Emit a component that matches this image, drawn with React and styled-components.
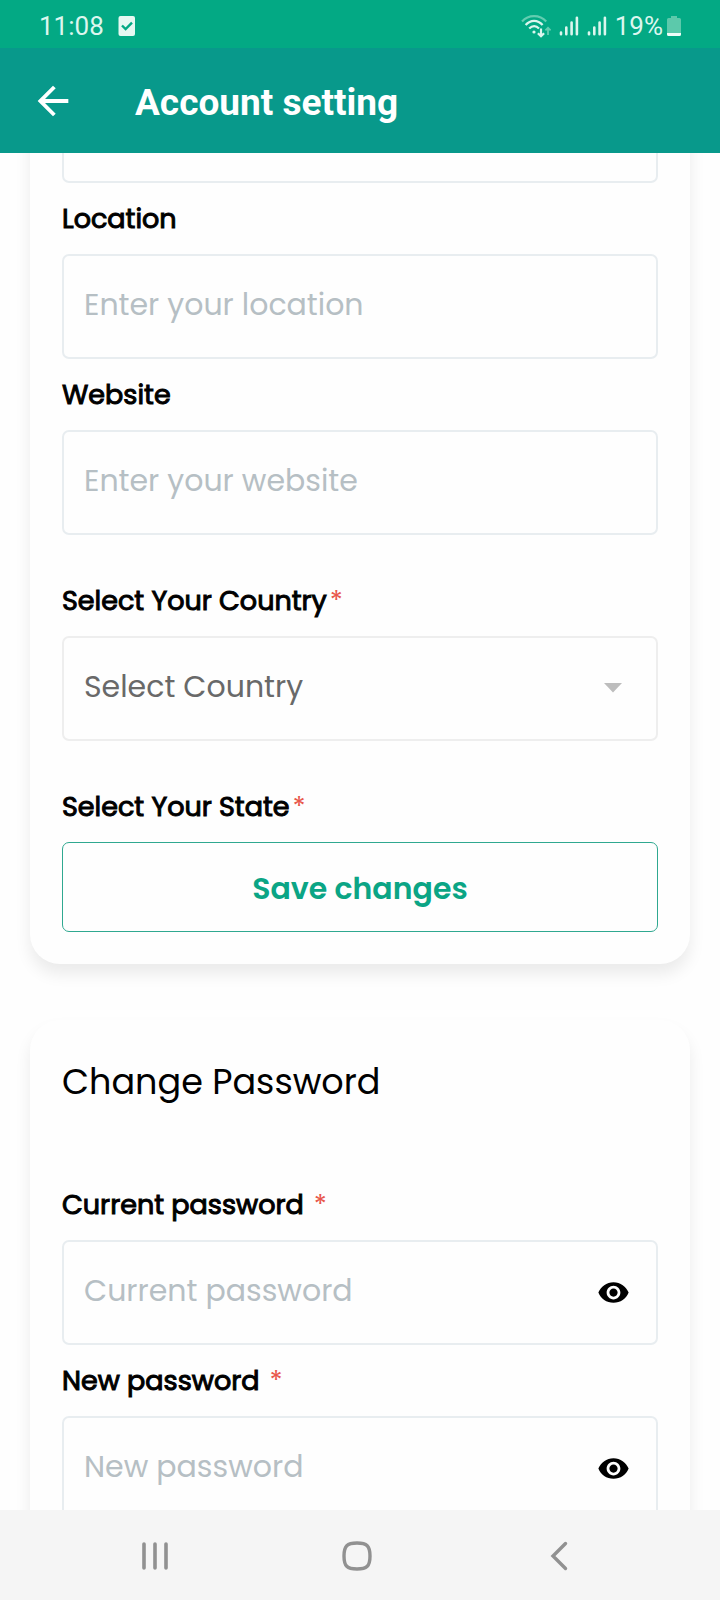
import React from "react";
import styled, { createGlobalStyle } from "styled-components";

const GlobalStyle = createGlobalStyle`
  *, *::before, *::after { box-sizing: border-box; }
  body { margin: 0; background: #fefefe; }
  button, input, select { font: inherit; }
`;

const textFont = `Poppins, Inter, "Liberation Sans", sans-serif`;
const systemFont = `Roboto, "Liberation Sans", sans-serif`;

const Screen = styled.div`
  display: flex;
  flex-direction: column;
  height: 100vh;
  overflow: hidden;
  font-family: ${textFont};
  color: #000;
`;

const StatusBar = styled.div`
  display: flex;
  align-items: center;
  justify-content: space-between;
  flex: none;
  height: 48px;
  padding: 4px 39px 0;
  background: #03a984;
  color: #dcf6ee;
  font-family: ${systemFont};
  font-size: 26px;
  line-height: 32px;
`;

const StatusGroup = styled.div`
  display: flex;
  align-items: center;
  gap: ${(p) => p.$gap}px;
`;

const Header = styled.header`
  display: flex;
  align-items: center;
  gap: 59px;
  flex: none;
  height: 105px;
  padding: 0 30px;
  background: #08998b;
  color: #fff;
`;

const Title = styled.h1`
  margin: 0;
  padding-top: 4px;
  font-family: ${systemFont};
  font-size: 37px;
  line-height: 44px;
  font-weight: 700;
`;

const IconButton = styled.button`
  display: flex;
  align-items: center;
  justify-content: center;
  flex: none;
  padding: 0;
  border: 0;
  background: none;
  color: inherit;
  cursor: pointer;
`;

const Content = styled.main`
  flex: 1;
  min-height: 0;
  overflow-y: auto;
  scrollbar-width: none;
  background: #fefefe;
`;

const Card = styled.section`
  display: flex;
  flex-direction: column;
  margin: ${(p) => (p.$scrolled ? "-107px" : "56px")} 30px 0;
  padding: 32px;
  border-radius: 30px;
  background: #fefefe;
  box-shadow: 0 10px 16px rgba(0, 0, 0, 0.08);
`;

const CardTitle = styled.h2`
  margin: 0 0 57px;
  font-size: 35px;
  line-height: 60px;
  font-weight: 400;
`;

const Field = styled.div`
  display: flex;
  flex-direction: column;
  padding-top: ${(p) => (p.$spaced ? 30 : 0)}px;
`;

const Label = styled.label`
  height: 71px;
  padding-top: 16px;
  font-size: 27px;
  line-height: 40px;
  font-weight: 400;
  -webkit-text-stroke: 1px #000;
`;

const Required = styled.span`
  margin-left: ${(p) => (p.$apart ? 10 : 3)}px;
  color: #e8574b;
  -webkit-text-stroke: 0;
`;

const Box = styled.div`
  display: flex;
  align-items: center;
  height: 105px;
  padding: 0 18px 0 20px;
  border: 2px solid ${(p) => p.$tone || "#e8edf0"};
  border-radius: 7px;
`;

const TextInput = styled.input`
  flex: 1;
  min-width: 0;
  padding: 0 0 3px;
  border: 0;
  outline: 0;
  background: transparent;
  font-size: 30px;
  line-height: 44px;
  color: #000;
  &::placeholder { color: #b6bfc4; opacity: 1; }
`;

const Select = styled.select`
  flex: 1;
  min-width: 0;
  padding: 0 0 3px;
  border: 0;
  outline: 0;
  appearance: none;
  background: transparent;
  font-size: 30px;
  line-height: 44px;
  color: #696969;
`;

const Trailing = styled.span`
  display: flex;
  justify-content: center;
  width: 50px;
`;

const EyeButton = styled(IconButton)`
  width: 50px;
  height: 50px;
`;

const SaveButton = styled.button`
  height: 90px;
  padding: 3px 0 0;
  border: 1px solid #2fa890;
  border-radius: 7px;
  background: transparent;
  color: #0ba585;
  font-size: 30px;
  font-weight: 600;
  line-height: 44px;
  cursor: pointer;
`;

const NavBar = styled.nav`
  display: flex;
  flex: none;
  height: 90px;
  padding: 2px 60px 0 54px;
  background: #f5f5f5;
  color: #919191;
`;

const NavButton = styled(IconButton)`
  flex: 1;
`;

const TaskIcon = () => (
  <svg width="18" height="20" viewBox="0 0 18 20">
    <rect x="0.5" y="0" width="16.5" height="20" rx="2" fill="#e6f8f2" />
    <path d="M4 9.5l3.6 3.6 6.4-6.4" fill="none" stroke="#03a984" strokeWidth="2.4" />
  </svg>
);

const WifiIcon = () => (
  <svg width="30" height="24" viewBox="0 0 30 24" fill="none" stroke="#dcf6ee" strokeWidth="2.2">
    <path d="M1 7.6C7.5 0.4 18.7 0.4 25.2 7.6" stroke="#62cdb0" />
    <path d="M4.6 11C9.5 5.4 16.7 5.4 21.6 11" />
    <path d="M8.2 14.6C11.4 11.3 15 11.3 18 14.6" />
    <circle cx="13" cy="18" r="1.6" fill="#dcf6ee" stroke="none" />
    <path d="M20 14.5V22M16.9 19.2l3.1 3.1 3.1-3.1" />
    <path d="M27 21v-7M24.4 16.4l2.6-2.6 2.6 2.6" stroke="#62cdb0" strokeWidth="1.8" />
  </svg>
);

const SignalIcon = () => (
  <svg width="20" height="20" viewBox="0 0 20 20" stroke="#dcf6ee" strokeWidth="2.6" strokeLinecap="round">
    <path d="M2 16.5v1.7M7.3 11.5v6.7M12.6 6.5v11.7M17.9 1.7v16.5" />
  </svg>
);

const BatteryIcon = () => (
  <svg width="14" height="21" viewBox="0 0 14 21">
    <path d="M4 0h6v2h2.5A1.5 1.5 0 0 1 14 3.5V17H0V3.5A1.5 1.5 0 0 1 1.5 2H4z" fill="#5cc9ab" />
    <path d="M0 17h14v1.5a1.5 1.5 0 0 1-1.5 1.5h-11A1.5 1.5 0 0 1 0 18.5z" fill="#effcf8" />
  </svg>
);

const BackArrow = () => (
  <svg width="46" height="46" viewBox="0 0 24 24" fill="currentColor">
    <path d="M20 11H7.83l5.59-5.59L12 4l-8 8 8 8 1.41-1.41L7.83 13H20v-2z" />
  </svg>
);

const EyeIcon = () => (
  <svg width="33" height="33" viewBox="0 0 24 24" fill="#000">
    <path d="M12 4.5C7 4.5 2.73 7.61 1 12c1.73 4.39 6 7.5 11 7.5s9.27-3.11 11-7.5c-1.73-4.39-6-7.5-11-7.5zM12 17c-2.76 0-5-2.24-5-5s2.24-5 5-5 5 2.24 5 5-2.24 5-5 5zm0-8c-1.66 0-3 1.34-3 3s1.34 3 3 3 3-1.34 3-3-1.34-3-3-3z" />
  </svg>
);

function TextField({ id, label, placeholder }) {
  return (
    <Field>
      <Label htmlFor={id}>{label}</Label>
      <Box>
        <TextInput id={id} placeholder={placeholder} />
      </Box>
    </Field>
  );
}

function PasswordField({ id, label }) {
  return (
    <Field>
      <Label htmlFor={id}>
        {label}
        <Required $apart>*</Required>
      </Label>
      <Box>
        <TextInput id={id} type="password" placeholder={label} />
        <EyeButton type="button">
          <EyeIcon />
        </EyeButton>
      </Box>
    </Field>
  );
}

export default function App() {
  return (
    <Screen>
      <GlobalStyle />
      <StatusBar>
        <StatusGroup $gap={14}>
          <span>11:08</span>
          <TaskIcon />
        </StatusGroup>
        <StatusGroup $gap={8}>
          <WifiIcon />
          <SignalIcon />
          <SignalIcon />
          <StatusGroup $gap={4}>
            <span>19%</span>
            <BatteryIcon />
          </StatusGroup>
        </StatusGroup>
      </StatusBar>
      <Header>
        <IconButton type="button">
          <BackArrow />
        </IconButton>
        <Title>Account setting</Title>
      </Header>
      <Content>
        <Card $scrolled>
          <Box>
            <TextInput />
          </Box>
          <TextField id="location" label="Location" placeholder="Enter your location" />
          <TextField id="website" label="Website" placeholder="Enter your website" />
          <Field $spaced>
            <Label htmlFor="country">
              Select Your Country<Required>*</Required>
            </Label>
            <Box $tone="#eeeeee">
              <Select id="country">
                <option>Select Country</option>
              </Select>
              <Trailing>
                <svg width="18" height="12" viewBox="0 0 18 12">
                  <path d="M0 0h18L9 9.5z" fill="#bdbdbd" />
                </svg>
              </Trailing>
            </Box>
          </Field>
          <Field $spaced>
            <Label as="span">
              Select Your State<Required>*</Required>
            </Label>
            <SaveButton type="button">Save changes</SaveButton>
          </Field>
        </Card>
        <Card>
          <CardTitle>Change Password</CardTitle>
          <PasswordField id="current-password" label="Current password" />
          <PasswordField id="new-password" label="New password" />
        </Card>
      </Content>
      <NavBar>
        <NavButton type="button">
          <svg width="28" height="30" viewBox="0 0 28 30" stroke="currentColor" strokeWidth="3.6" strokeLinecap="round">
            <path d="M3 3v24M14 3v24M25 3v24" />
          </svg>
        </NavButton>
        <NavButton type="button">
          <svg width="32" height="32" viewBox="0 0 32 32" fill="none" stroke="currentColor" strokeWidth="3.4">
            <path d="M16 3C26 3 29 6 29 16S26 29 16 29 3 26 3 16 6 3 16 3z" />
          </svg>
        </NavButton>
        <NavButton type="button">
          <svg width="18" height="30" viewBox="0 0 18 30" fill="none" stroke="currentColor" strokeWidth="3.4" strokeLinecap="round">
            <path d="M15.5 2.5L3 15l12.5 12.5" />
          </svg>
        </NavButton>
      </NavBar>
    </Screen>
  );
}
